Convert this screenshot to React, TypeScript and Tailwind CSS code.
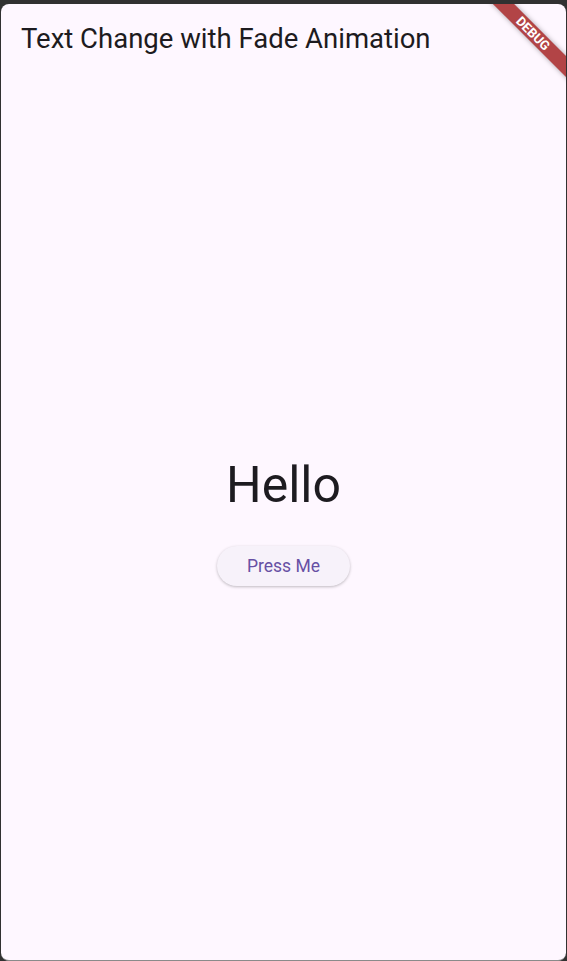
import React from "react";

export default function App() {
  return (
    <div className="w-[567px] h-[961px] bg-[#313131] pt-[4px] pl-[1px] pr-[1px] overflow-hidden" style={{ fontFamily: "Roboto, sans-serif" }}>
      <div className="relative w-[565px] h-[957px] bg-[#fef7ff] rounded-[8px] overflow-hidden border-b border-[#8a8a8a] flex flex-col">
        <div className="h-[70px] flex items-center pl-[20px]">
          <span className="text-[27.5px] text-[#1d1b20] leading-none">Text Change with Fade Animation</span>
        </div>
        <div className="flex-1 flex flex-col items-center justify-center pt-[12px]">
          <div className="text-[50px] text-[#1d1b20] leading-none">Hello</div>
          <button className="mt-[36px] w-[133px] h-[40px] rounded-full bg-[#f7f2fa] text-[#6750a4] text-[17.5px] shadow-[0_1px_3px_rgba(0,0,0,0.25)]">
            Press Me
          </button>
        </div>
        <div className="absolute top-[22px] right-[-32px] w-[130px] h-[15px] bg-[#b24446] rotate-45 flex items-center justify-center shadow-[0_0_5px_rgba(0,0,0,0.35)]">
          <span className="text-white text-[13px] font-bold leading-none">DEBUG</span>
        </div>
      </div>
    </div>
  );
}
